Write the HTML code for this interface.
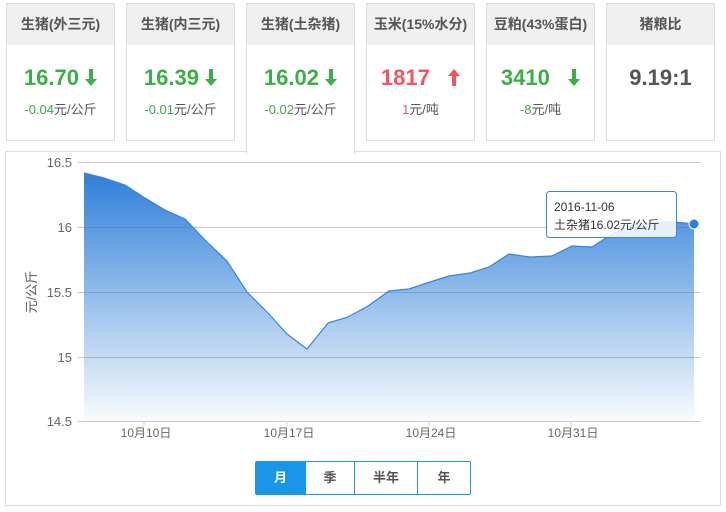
<!DOCTYPE html>
<html><head><meta charset="utf-8"><style>
body{margin:0;width:726px;height:512px;background:#fff;font-family:"Liberation Sans","Noto Sans CJK SC",sans-serif;position:relative;overflow:hidden}
.card{position:absolute;top:3px;width:107px;height:136px;border:1px solid #ddd;background:#fff;text-align:center}
.card .h{height:41px;background:#f0f0f0;line-height:41px;font-size:14px;font-weight:bold;color:#555}
.card .v{margin-top:20px;font-size:22px;font-weight:bold;line-height:26px}
.card .v svg{vertical-align:-1px}
.card .s{margin-top:8px;font-size:13px;color:#555}
.g{color:#3cae47}.r{color:#f25560}
.card.act{height:150px;border-bottom:none;z-index:2}
.box{position:absolute;left:5px;top:151px;width:714px;height:353px;border:1px solid #ddd}
.btns{position:absolute;left:255px;top:461px;height:32px;width:214px;border:1px solid #1a96e8;border-radius:2px;display:flex;font-size:13px;font-weight:bold;color:#555}
.btns div{line-height:32px;text-align:center;border-left:1px solid #1a96e8}
</style></head><body>
<div class="card" style="left:6px"><div class="h">生猪(外三元)</div><div class="v g">16.70 <svg width="12" height="17" viewBox="0 0 12 17"><path d="M4,0H8V10H12L6,17L0,10H4Z" fill="#3cae47"/></svg></div><div class="s"><span class="g">-0.04</span>元/公斤</div></div>
<div class="card" style="left:126px"><div class="h">生猪(内三元)</div><div class="v g">16.39 <svg width="12" height="17" viewBox="0 0 12 17"><path d="M4,0H8V10H12L6,17L0,10H4Z" fill="#3cae47"/></svg></div><div class="s"><span class="g">-0.01</span>元/公斤</div></div>
<div class="card act" style="left:246px"><div class="h">生猪(土杂猪)</div><div class="v g">16.02 <svg width="12" height="17" viewBox="0 0 12 17"><path d="M4,0H8V10H12L6,17L0,10H4Z" fill="#3cae47"/></svg></div><div class="s"><span class="g">-0.02</span>元/公斤</div></div>
<div class="card" style="left:366px"><div class="h">玉米(15%水分)</div><div class="v r">1817 &nbsp;&nbsp;<svg width="12" height="17" viewBox="0 0 12 17"><path d="M4,17H8V7H12L6,0L0,7H4Z" fill="#f25560"/></svg></div><div class="s"><span class="r">1</span>元/吨</div></div>
<div class="card" style="left:486px"><div class="h">豆粕(43%蛋白)</div><div class="v g">3410 &nbsp;&nbsp;<svg width="12" height="17" viewBox="0 0 12 17"><path d="M4,0H8V10H12L6,17L0,10H4Z" fill="#3cae47"/></svg></div><div class="s"><span class="g">-8</span>元/吨</div></div>
<div class="card" style="left:606px"><div class="h">猪粮比</div><div class="v" style="color:#555">9.19:1</div></div>
<div class="box"></div>
<svg style="position:absolute;left:0;top:0" width="726" height="512">
<defs><linearGradient id="gr" x1="0" y1="0" x2="0" y2="1"><stop offset="0" stop-color="#2f7fd8"/><stop offset="1" stop-color="#2f7fd8" stop-opacity="0.03"/></linearGradient></defs>
<g stroke="#c8c8c8" stroke-width="1">
<line x1="78" y1="162.5" x2="700" y2="162.5"/><line x1="78" y1="227.5" x2="700" y2="227.5"/><line x1="78" y1="292.5" x2="700" y2="292.5"/><line x1="78" y1="357.5" x2="700" y2="357.5"/><line x1="78" y1="421.5" x2="700" y2="421.5"/>
</g>
<path d="M84,173 L104,178 L125,185 L145,198 L165,210 L185,219 L205,240 L227,261 L247,292 L268,313 L287,334 L307,349 L328,323 L348,317 L368,306 L389,291 L409,289 L430,282 L449,276 L470,273 L489,267 L509,254 L530,257 L552,256 L572,246 L592,247 L612,234 L633,225 L654,222 L674,222 L694,224 L694,421 L84,421Z" fill="url(#gr)"/>
<path d="M84,173 L104,178 L125,185 L145,198 L165,210 L185,219 L205,240 L227,261 L247,292 L268,313 L287,334 L307,349 L328,323 L348,317 L368,306 L389,291 L409,289 L430,282 L449,276 L470,273 L489,267 L509,254 L530,257 L552,256 L572,246 L592,247 L612,234 L633,225 L654,222 L674,222 L694,224" fill="none" stroke="#3a84d9" stroke-width="1.2"/>
<circle cx="694" cy="224" r="5" fill="#2f7fd8" stroke="#fff" stroke-width="1"/>
<g stroke="#c8d0dc"><line x1="144" y1="421" x2="144" y2="426"/><line x1="287" y1="421" x2="287" y2="426"/><line x1="429" y1="421" x2="429" y2="426"/><line x1="571" y1="421" x2="571" y2="426"/></g>
<g font-size="13" fill="#666" text-anchor="end" font-family="Liberation Sans, sans-serif">
<text x="72" y="167">16.5</text><text x="72" y="232">16</text><text x="72" y="297">15.5</text><text x="72" y="362">15</text><text x="72" y="426">14.5</text></g>
<g font-size="12" fill="#666" text-anchor="middle" font-family="Liberation Sans, Noto Sans CJK SC, sans-serif">
<text x="146" y="437">10月10日</text><text x="289" y="437">10月17日</text><text x="431" y="437">10月24日</text><text x="573" y="437">10月31日</text></g>
<text transform="translate(36,292) rotate(-90)" font-size="13" fill="#556" text-anchor="middle" font-family="Liberation Sans, Noto Sans CJK SC, sans-serif">元/公斤</text>
<rect x="546.5" y="191.5" width="130" height="46" rx="3" fill="#fff" fill-opacity="0.85" stroke="#3a84d9"/>
<text x="554" y="211" font-size="12" fill="#333" font-family="Liberation Sans, sans-serif">2016-11-06</text>
<text x="554" y="229" font-size="12" fill="#333" font-family="Liberation Sans, Noto Sans CJK SC, sans-serif">土杂猪16.02元/公斤</text>
</svg>
<div class="btns"><div style="width:49px;border:none;background:#1a96e8;color:#fff">月</div><div style="width:48px">季</div><div style="width:62px">半年</div><div style="flex:1">年</div></div>
</body></html>
